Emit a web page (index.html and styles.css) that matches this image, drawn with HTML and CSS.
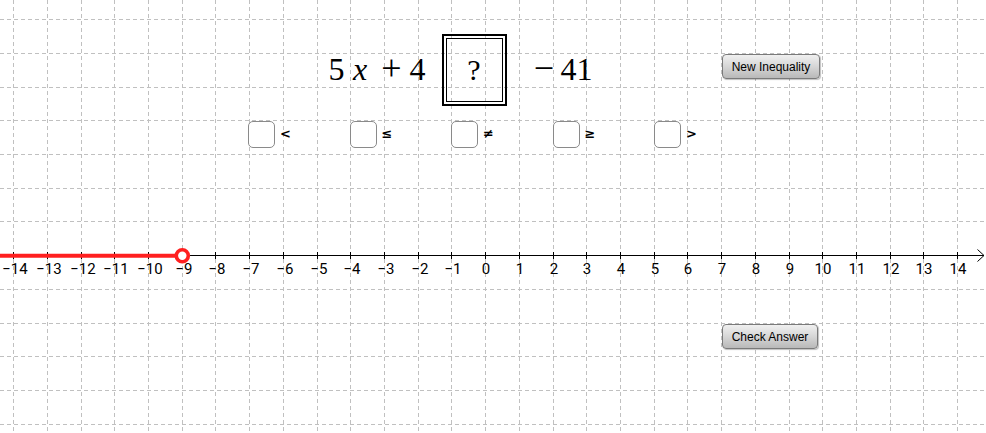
FILE: index.html
```html
<!DOCTYPE html>
<html>
<head>
<meta charset="utf-8">
<link rel="stylesheet" href="styles.css">
</head>
<body>
<div class="applet">
  <svg class="canvas" width="986" height="433" viewBox="0 0 986 433">
    <g class="grid">
      <line x1="13.5" y1="0" x2="13.5" y2="433"/>
      <line x1="47.5" y1="0" x2="47.5" y2="433"/>
      <line x1="81.5" y1="0" x2="81.5" y2="433"/>
      <line x1="114.5" y1="0" x2="114.5" y2="433"/>
      <line x1="148.5" y1="0" x2="148.5" y2="433"/>
      <line x1="182.5" y1="0" x2="182.5" y2="433"/>
      <line x1="215.5" y1="0" x2="215.5" y2="433"/>
      <line x1="249.5" y1="0" x2="249.5" y2="433"/>
      <line x1="283.5" y1="0" x2="283.5" y2="433"/>
      <line x1="317.5" y1="0" x2="317.5" y2="433"/>
      <line x1="350.5" y1="0" x2="350.5" y2="433"/>
      <line x1="384.5" y1="0" x2="384.5" y2="433"/>
      <line x1="418.5" y1="0" x2="418.5" y2="433"/>
      <line x1="451.5" y1="0" x2="451.5" y2="433"/>
      <line x1="485.5" y1="0" x2="485.5" y2="433"/>
      <line x1="519.5" y1="0" x2="519.5" y2="433"/>
      <line x1="553.5" y1="0" x2="553.5" y2="433"/>
      <line x1="586.5" y1="0" x2="586.5" y2="433"/>
      <line x1="620.5" y1="0" x2="620.5" y2="433"/>
      <line x1="654.5" y1="0" x2="654.5" y2="433"/>
      <line x1="687.5" y1="0" x2="687.5" y2="433"/>
      <line x1="721.5" y1="0" x2="721.5" y2="433"/>
      <line x1="755.5" y1="0" x2="755.5" y2="433"/>
      <line x1="789.5" y1="0" x2="789.5" y2="433"/>
      <line x1="822.5" y1="0" x2="822.5" y2="433"/>
      <line x1="856.5" y1="0" x2="856.5" y2="433"/>
      <line x1="890.5" y1="0" x2="890.5" y2="433"/>
      <line x1="923.5" y1="0" x2="923.5" y2="433"/>
      <line x1="957.5" y1="0" x2="957.5" y2="433"/>
      <line x1="0" y1="19.5" x2="986" y2="19.5"/>
      <line x1="0" y1="53.5" x2="986" y2="53.5"/>
      <line x1="0" y1="87.5" x2="986" y2="87.5"/>
      <line x1="0" y1="120.5" x2="986" y2="120.5"/>
      <line x1="0" y1="154.5" x2="986" y2="154.5"/>
      <line x1="0" y1="188.5" x2="986" y2="188.5"/>
      <line x1="0" y1="221.5" x2="986" y2="221.5"/>
      <line x1="0" y1="289.5" x2="986" y2="289.5"/>
      <line x1="0" y1="323.5" x2="986" y2="323.5"/>
      <line x1="0" y1="356.5" x2="986" y2="356.5"/>
      <line x1="0" y1="390.5" x2="986" y2="390.5"/>
      <line x1="0" y1="424.5" x2="986" y2="424.5"/>
    </g>
    <g class="axis">
      <line x1="0" y1="255.5" x2="984" y2="255.5"/>
      <polyline class="arrow" points="977.5,249.5 984,255.5 977.5,261.5"/>
      <g class="ticks">
        <line x1="13.5" y1="252" x2="13.5" y2="259"/>
        <line x1="47.5" y1="252" x2="47.5" y2="259"/>
        <line x1="81.5" y1="252" x2="81.5" y2="259"/>
        <line x1="114.5" y1="252" x2="114.5" y2="259"/>
        <line x1="148.5" y1="252" x2="148.5" y2="259"/>
        <line x1="215.5" y1="252" x2="215.5" y2="259"/>
        <line x1="249.5" y1="252" x2="249.5" y2="259"/>
        <line x1="283.5" y1="252" x2="283.5" y2="259"/>
        <line x1="317.5" y1="252" x2="317.5" y2="259"/>
        <line x1="350.5" y1="252" x2="350.5" y2="259"/>
        <line x1="384.5" y1="252" x2="384.5" y2="259"/>
        <line x1="418.5" y1="252" x2="418.5" y2="259"/>
        <line x1="451.5" y1="252" x2="451.5" y2="259"/>
        <line x1="485.5" y1="252" x2="485.5" y2="259"/>
        <line x1="519.5" y1="252" x2="519.5" y2="259"/>
        <line x1="553.5" y1="252" x2="553.5" y2="259"/>
        <line x1="586.5" y1="252" x2="586.5" y2="259"/>
        <line x1="620.5" y1="252" x2="620.5" y2="259"/>
        <line x1="654.5" y1="252" x2="654.5" y2="259"/>
        <line x1="687.5" y1="252" x2="687.5" y2="259"/>
        <line x1="721.5" y1="252" x2="721.5" y2="259"/>
        <line x1="755.5" y1="252" x2="755.5" y2="259"/>
        <line x1="789.5" y1="252" x2="789.5" y2="259"/>
        <line x1="822.5" y1="252" x2="822.5" y2="259"/>
        <line x1="856.5" y1="252" x2="856.5" y2="259"/>
        <line x1="890.5" y1="252" x2="890.5" y2="259"/>
        <line x1="923.5" y1="252" x2="923.5" y2="259"/>
        <line x1="957.5" y1="252" x2="957.5" y2="259"/>
      </g>
      <g class="labels">
        <text x="15" y="274">−14</text>
        <text x="49" y="274">−13</text>
        <text x="83" y="274">−12</text>
        <text x="116" y="274">−11</text>
        <text x="150" y="274">−10</text>
        <text x="184" y="274">−9</text>
        <text x="217" y="274">−8</text>
        <text x="251" y="274">−7</text>
        <text x="285" y="274">−6</text>
        <text x="319" y="274">−5</text>
        <text x="352" y="274">−4</text>
        <text x="386" y="274">−3</text>
        <text x="420" y="274">−2</text>
        <text x="453" y="274">−1</text>
        <text x="486" y="274">0</text>
        <text x="520" y="274">1</text>
        <text x="554" y="274">2</text>
        <text x="587" y="274">3</text>
        <text x="621" y="274">4</text>
        <text x="655" y="274">5</text>
        <text x="688" y="274">6</text>
        <text x="722" y="274">7</text>
        <text x="756" y="274">8</text>
        <text x="790" y="274">9</text>
        <text x="823" y="274">10</text>
        <text x="857" y="274">11</text>
        <text x="891" y="274">12</text>
        <text x="924" y="274">13</text>
        <text x="958" y="274">14</text>
      </g>
    </g>
    <line class="ray" x1="0" y1="255.7" x2="177" y2="255.7"/>
    <circle class="open-dot" cx="182.3" cy="255.7" r="6"/>
  </svg>

  <div class="equation">
    <span class="eq eq-5">5</span>
    <span class="eq eq-x"><i>x</i></span>
    <span class="eq eq-plus">+</span>
    <span class="eq eq-4">4</span>
    <span class="qbox"><span class="qinner">?</span></span>
    <span class="eq eq-minus">−</span>
    <span class="eq eq-41">41</span>
  </div>

  <button class="btn btn-new">New Inequality</button>

  <div class="choices">
    <label class="choice"><span class="box"></span><span class="sym">&lt;</span></label>
    <label class="choice"><span class="box"></span><span class="sym">≤</span></label>
    <label class="choice"><span class="box"></span><span class="sym">≠</span></label>
    <label class="choice"><span class="box"></span><span class="sym">≥</span></label>
    <label class="choice"><span class="box"></span><span class="sym">&gt;</span></label>
  </div>

  <button class="btn btn-check">Check Answer</button>
</div>
</body>
</html>
```

FILE: styles.css
```css
html, body {
  margin: 0;
  padding: 0;
  background: #ffffff;
}

.applet {
  position: relative;
  width: 986px;
  height: 433px;
  overflow: hidden;
  background: #ffffff;
  font-family: "Liberation Sans", Arial, sans-serif;
}

.canvas {
  position: absolute;
  left: 0;
  top: 0;
  display: block;
}

.grid line {
  stroke: #c0c0c0;
  stroke-width: 1;
  stroke-dasharray: 4 3;
}

.axis line {
  stroke: #000000;
  stroke-width: 1;
}

.arrow {
  fill: none;
  stroke: #000000;
  stroke-width: 1;
}

.labels text {
  font-family: Roboto, "Liberation Sans", sans-serif;
  font-size: 15px;
  fill: #000000;
  text-anchor: middle;
}

.ray {
  stroke: #ff2020;
  stroke-width: 4;
}

.open-dot {
  fill: #ffffff;
  stroke: #ff2020;
  stroke-width: 3.6;
}

.equation {
  position: absolute;
  left: 326.5px;
  top: 34px;
  height: 72px;
  display: flex;
  align-items: center;
  font-family: "Liberation Serif", "DejaVu Serif", serif;
  font-size: 32px;
  color: #000000;
  white-space: nowrap;
}

.eq {
  display: block;
  text-align: center;
  line-height: 1;
  margin-top: -2px;
}

.eq-5 { width: 20px; }
.eq-x { width: 27px; }
.eq-plus { width: 36px; font-size: 36px; margin-top: -5px; }
.eq-4 { width: 16px; }
.eq-minus { width: 33px; font-size: 36px; margin-top: -5px; }
.eq-41 { width: 32px; }

.eq-x i {
  font-style: italic;
}

.qbox {
  box-sizing: border-box;
  width: 65px;
  height: 72px;
  margin-left: 16px;
  margin-right: 21px;
  border: 2.5px solid #000000;
  padding: 2px;
  display: flex;
}

.qinner {
  flex: 1;
  border: 1px solid #000000;
  display: flex;
  align-items: center;
  justify-content: center;
  font-size: 30px;
}

.btn {
  position: absolute;
  box-sizing: border-box;
  height: 25px;
  padding: 0;
  border: 1px solid #7a7a7a;
  border-radius: 4px;
  background: linear-gradient(#f0f0f0 0%, #d6d6d6 50%, #b9b9b9 100%);
  box-shadow: 1px 1px 1px rgba(0, 0, 0, 0.25);
  font-family: "Liberation Sans", Arial, sans-serif;
  font-size: 12px;
  color: #000000;
  text-align: center;
}

.btn-new {
  left: 722px;
  top: 54px;
  width: 98px;
}

.btn-check {
  left: 722px;
  top: 324px;
  width: 96px;
}

.choices {
  position: absolute;
  left: 248px;
  top: 121px;
  display: flex;
}

.choice {
  width: 101.5px;
  display: flex;
  align-items: center;
  gap: 5px;
}

.box {
  box-sizing: border-box;
  width: 27px;
  height: 27px;
  border: 1.5px solid #8a8a8a;
  border-radius: 5px;
  background: #ffffff;
}

.sym {
  font-family: "DejaVu Sans", sans-serif;
  font-size: 13px;
  font-weight: bold;
  color: #000000;
  margin-top: -2px;
}
```
